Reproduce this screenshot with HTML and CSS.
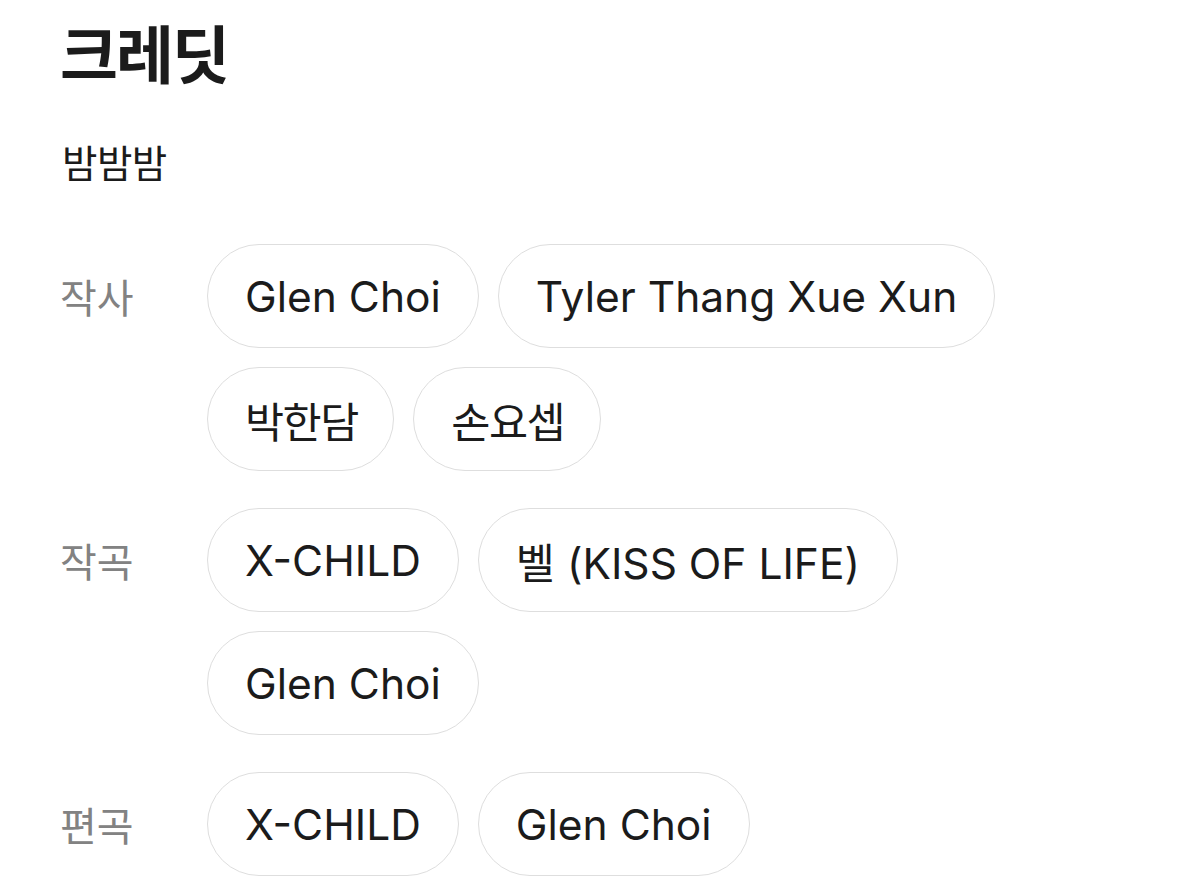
FILE: index.html
```html
<!DOCTYPE html>
<html lang="ko">
<head>
<meta charset="utf-8">
<link rel="stylesheet" href="styles.css">
</head>
<body>
<main class="credits">
  <h1 class="title">크레딧</h1>
  <p class="song">밤밤밤</p>
  <section class="group">
    <div class="label">작사</div>
    <div class="chips">
      <span class="chip">Glen Choi</span>
      <span class="chip">Tyler Thang Xue Xun</span>
      <span class="chip chip-ko">박한담</span>
      <span class="chip chip-ko">손요셉</span>
    </div>
  </section>
  <section class="group">
    <div class="label">작곡</div>
    <div class="chips">
      <span class="chip">X-CHILD</span>
      <span class="chip">벨 (KISS OF LIFE)</span>
      <span class="chip">Glen Choi</span>
    </div>
  </section>
  <section class="group">
    <div class="label">편곡</div>
    <div class="chips">
      <span class="chip">X-CHILD</span>
      <span class="chip">Glen Choi</span>
    </div>
  </section>
</main>
</body>
</html>
```
FILE: styles.css
```css
* { box-sizing: border-box; }
html, body { margin: 0; padding: 0; background: #fff; }
body {
  font-family: Inter, "Noto Sans CJK KR", sans-serif;
  color: #1b1b1b;
}
.credits {
  padding: 11px 0 0 60px;
  display: flex;
  flex-direction: column;
}
.title {
  margin: 0;
  font-family: "Noto Sans CJK KR", sans-serif;
  font-weight: 700;
  font-size: 63px;
  line-height: 80px;
  letter-spacing: -2px;
  color: #1b1b1b;
}
.song {
  margin: 48px 0 0 2px;
  font-family: "Noto Sans CJK KR", sans-serif;
  font-size: 38.5px;
  line-height: 44px;
  letter-spacing: -0.5px;
  color: #1b1b1b;
}
.group {
  display: grid;
  grid-template-columns: 147px 1fr;
  margin-top: 37px;
}
.song + .group { margin-top: 61px; }
.label {
  font-family: "Noto Sans CJK KR", sans-serif;
  font-size: 40px;
  line-height: 104px;
  height: 104px;
  letter-spacing: 0;
  color: #828282;
}
.chips {
  display: flex;
  flex-wrap: wrap;
  gap: 19px;
  max-width: 860px;
}
.chip {
  display: inline-flex;
  align-items: center;
  height: 104px;
  padding: 0 37px;
  border: 1.5px solid #dedede;
  border-radius: 52px;
  font-size: 42.5px;
  white-space: nowrap;
}
.chip-ko {
  letter-spacing: -1.5px;
  padding-right: 35.5px;
}
```
